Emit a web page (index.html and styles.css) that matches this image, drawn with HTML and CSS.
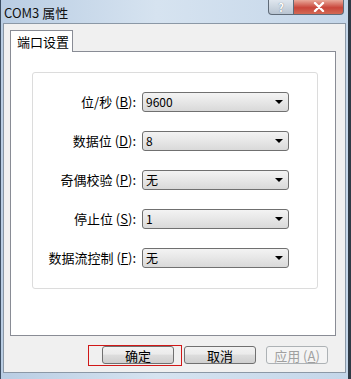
FILE: index.html
```html
<!doctype html>
<html lang="zh-CN">
<head>
<meta charset="utf-8">
<title>COM3 属性</title>
<link rel="stylesheet" href="styles.css">
</head>
<body>
<div class="window">
  <div class="titlebar">
    <span class="title">COM3 属性</span>
    <div class="controls">
      <span class="ctl help">?</span>
      <span class="ctl close">
        <svg width="14" height="10" viewBox="0 0 14 10"><path d="M3 1 L11 9 M11 1 L3 9" stroke="#fff" stroke-width="2.4" stroke-linecap="round"/></svg>
      </span>
    </div>
  </div>
  <div class="client">
    <div class="tabs"><span class="tab">端口设置</span></div>
    <div class="panel">
      <div class="group">
        <label class="lbl">位/秒 (<u>B</u>):</label>
        <div class="combo"><span>9600</span><i class="arrow"></i></div>
        <label class="lbl">数据位 (<u>D</u>):</label>
        <div class="combo"><span>8</span><i class="arrow"></i></div>
        <label class="lbl">奇偶校验 (<u>P</u>):</label>
        <div class="combo"><span>无</span><i class="arrow"></i></div>
        <label class="lbl">停止位 (<u>S</u>):</label>
        <div class="combo"><span>1</span><i class="arrow"></i></div>
        <label class="lbl">数据流控制 (<u>F</u>):</label>
        <div class="combo"><span>无</span><i class="arrow"></i></div>
      </div>
    </div>
    <div class="actions">
      <span class="btn ok">确定<span class="mark"></span></span>
      <span class="btn">取消</span>
      <span class="btn disabled">应用 (<u>A</u>)</span>
    </div>
  </div>
</div>
</body>
</html>
```

FILE: styles.css
```css
html, body { margin: 0; padding: 0; }
body { font-family: "Noto Sans CJK SC", "DejaVu Sans", sans-serif; font-size: 12px; color: #000; }
.window { width: 351px; height: 379px; box-sizing: border-box; display: flex; flex-direction: column; background: linear-gradient(90deg, #b9cde3 0%, #d6e3f0 45%, #c4d6e9 100%); border-left: 1px solid #3d4f63; border-right: 3px solid #2f3a46; }
.titlebar { height: 23px; display: flex; align-items: flex-start; position: relative; }
.title { font-size: 13px; line-height: 15px; padding: 5px 0 0 3px; color: #111; }
.controls { margin-left: auto; margin-right: 4px; display: flex; }
.ctl { height: 15px; display: flex; align-items: center; justify-content: center; border: 1px solid #5f6b78; border-top: none; box-sizing: border-box; }
.help { width: 26px; border-radius: 0 0 0 4px; background: linear-gradient(#dfe6ee, #b8c4d1); color: #fff; font-weight: bold; font-size: 11px; text-shadow: 0 0 1px #55606c; }
.close { width: 50px; border-left: none; border-radius: 0 0 4px 0; background: linear-gradient(#e9a99a, #c9463a 55%, #d36a55); }
.client { flex: 1; margin: 0 2px 6px 2px; background: #f0f0f0; border: 1px solid #8b98a6; display: flex; flex-direction: column; padding: 6px 9px 0 6px; }
.tabs { display: flex; height: 21px; }
.tab { width: 63px; height: 22px; box-sizing: border-box; background: #fff; border: 1px solid #898c95; border-bottom: none; padding: 2px 0 0 6px; font-size: 13px; line-height: 17px; position: relative; z-index: 1; }
.panel { height: 285px; box-sizing: border-box; background: #fff; border: 1px solid #898c95; padding: 20px 17px 0 21px; }
.group { height: 217px; box-sizing: border-box; border: 1px solid #dcdcdc; border-radius: 3px; display: grid; grid-template-columns: 103px 147px; column-gap: 6px; row-gap: 19px; align-content: start; padding-top: 19px; }
.lbl { text-align: right; font-size: 13px; line-height: 20px; height: 20px; white-space: nowrap; }
.combo { height: 20px; box-sizing: border-box; border: 1px solid #707070; border-radius: 3px; background: linear-gradient(#f3f3f3, #e8e8e8 45%, #d9d9d9); display: flex; align-items: center; padding: 0 5px 0 3px; font-size: 12px; }
.combo span { flex: 1; line-height: 16px; }
.arrow { width: 0; height: 0; border-left: 4px solid transparent; border-right: 4px solid transparent; border-top: 4px solid #000; }
.actions { display: flex; gap: 10px; padding: 10px 8px 0 0; justify-content: flex-end; }
.btn { width: 72px; height: 18px; box-sizing: border-box; border: 1px solid #707070; border-radius: 3px; background: linear-gradient(#f2f2f2, #ebebeb 45%, #dddddd 50%, #cfcfcf); display: flex; align-items: center; justify-content: center; font-size: 13px; position: relative; }
.btn.disabled { width: 62px; color: #a0a0a0; border-color: #adb2b5; background: #f4f4f4; }
.mark { position: absolute; left: -15px; top: -2px; width: 94px; height: 21px; border: 1px solid #d01818; box-sizing: border-box; }
```
